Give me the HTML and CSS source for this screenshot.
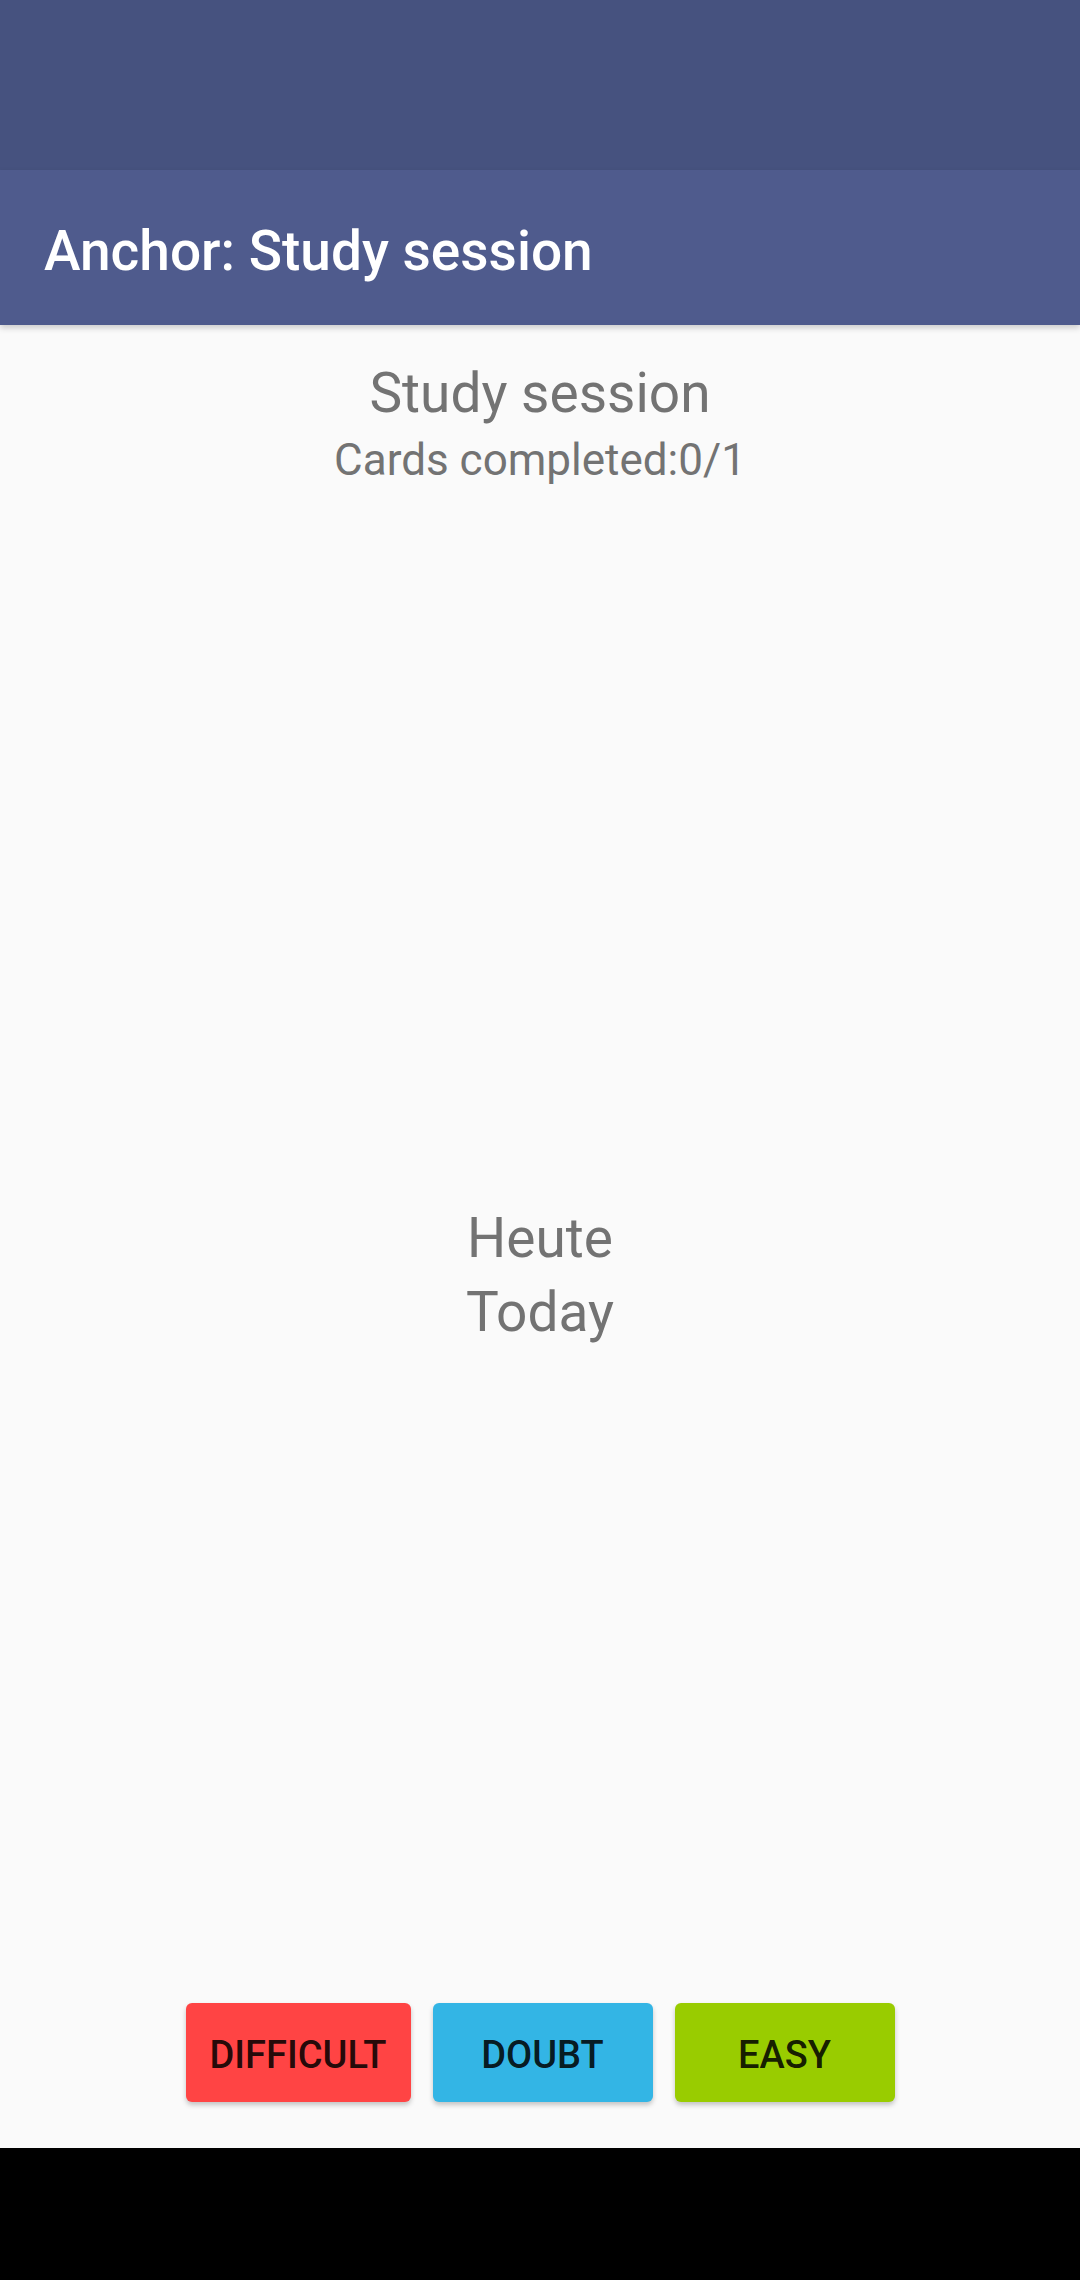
FILE: index.html
```html
<!DOCTYPE html>
<html>
<head>
<meta charset="utf-8">
<link rel="stylesheet" href="styles.css">
</head>
<body>
<div class="screen">
  <div class="status-bar"></div>
  <header class="app-bar"><h1 class="app-title">Anchor: Study session</h1></header>
  <main class="content">
    <div class="session-head">
      <div class="session-title">Study session</div>
      <div class="session-progress">Cards completed:0/1</div>
    </div>
    <div class="card-text">
      <div class="card-line">Heute</div>
      <div class="card-line">Today</div>
    </div>
    <div class="spacer"></div>
    <div class="answer-row">
      <button class="answer answer-difficult">DIFFICULT</button>
      <button class="answer answer-doubt">DOUBT</button>
      <button class="answer answer-easy">EASY</button>
    </div>
  </main>
  <div class="nav-bar"></div>
</div>
</body>
</html>
```
FILE: styles.css
```css
html, body {
  margin: 0;
  padding: 0;
}
body {
  width: 1080px;
  height: 2280px;
  overflow: hidden;
  font-family: Roboto, "Noto Sans", "Liberation Sans", sans-serif;
  background: #fafafa;
}
.screen {
  display: flex;
  flex-direction: column;
  height: 2280px;
}
.status-bar {
  height: 170px;
  background: #46527f;
  flex: none;
}
.app-bar {
  height: 155px;
  box-sizing: border-box;
  flex: none;
  background: #4f5b8d;
  display: flex;
  align-items: center;
  padding-left: 44px;
  padding-top: 6px;
  box-shadow: 0 3px 6px rgba(0, 0, 0, 0.18);
  position: relative;
  z-index: 2;
}
.app-title {
  margin: 0;
  font-size: 55px;
  font-weight: 500;
  color: #ffffff;
  line-height: 64px;
}
.content {
  flex: 1;
  display: flex;
  flex-direction: column;
  align-items: center;
  background: #fafafa;
  padding-top: 31px;
}
.session-head {
  text-align: center;
  color: #737373;
}
.session-title {
  font-size: 55px;
  line-height: 74px;
}
.session-progress {
  font-size: 44px;
  line-height: 60px;
}
.card-text {
  margin-top: 711px;
  text-align: center;
  color: #737373;
}
.card-line {
  font-size: 55px;
  line-height: 74px;
}
.spacer {
  flex: 1;
}
.answer-row {
  display: flex;
  gap: 22px;
  margin-bottom: 46px;
}
.answer {
  height: 99px;
  border: none;
  border-radius: 6px;
  font-family: Roboto, "Noto Sans", "Liberation Sans", sans-serif;
  font-size: 38px;
  font-weight: 500;
  color: rgba(0, 0, 0, 0.87);
  box-shadow: 0 3px 5px rgba(0, 0, 0, 0.22);
  padding: 5px 0 0 0;
}
.answer-difficult {
  width: 225px;
  background: #ff4444;
}
.answer-doubt {
  width: 220px;
  background: #33b5e5;
}
.answer-easy {
  width: 220px;
  background: #99cc00;
}
.nav-bar {
  height: 132px;
  flex: none;
  background: #000000;
}
```
